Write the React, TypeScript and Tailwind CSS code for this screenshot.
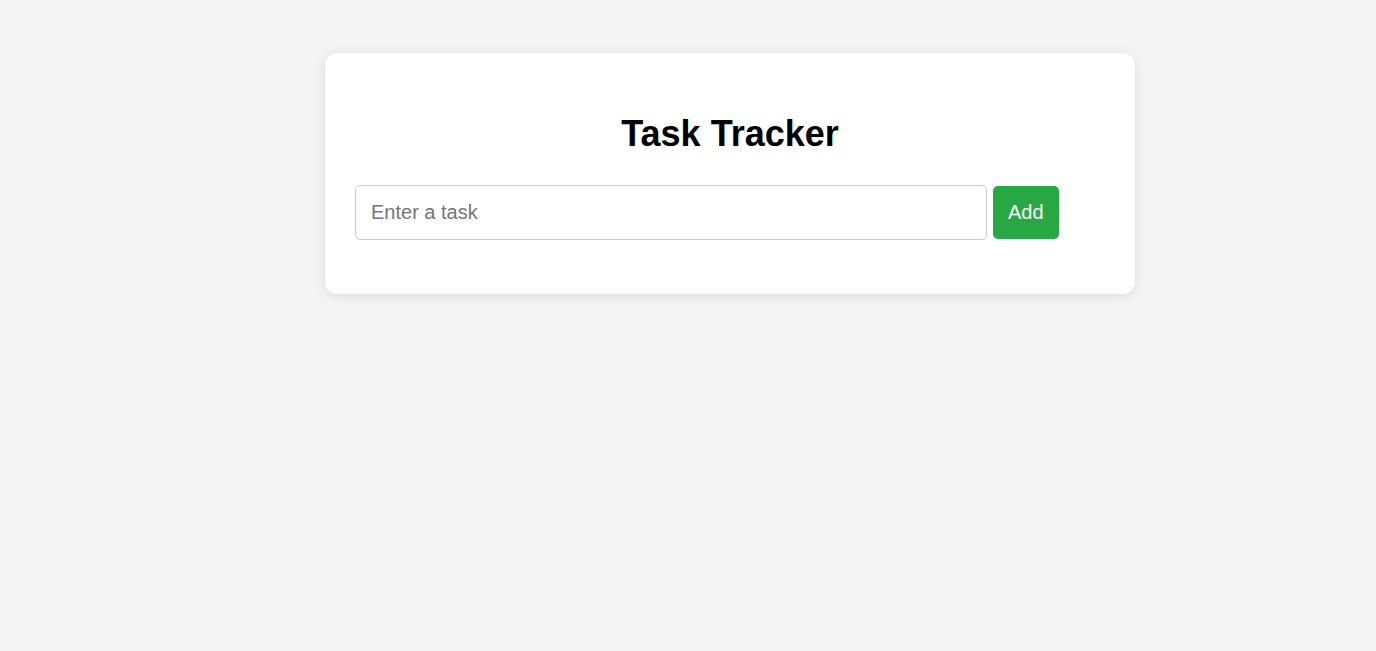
import React, { useState } from 'react';

export default function App() {
  const [task, setTask] = useState('');

  return (
    <div className="min-h-screen bg-[#f4f4f4] pt-[53px] font-['Liberation_Sans',Arial,sans-serif]">
      <div className="ml-[325px] w-[810px] rounded-[12px] bg-white px-[30px] pt-[30px] pb-[54px] shadow-[0_2px_12px_rgba(0,0,0,0.1)]">
        <h1 className="mt-[30px] mb-[31px] text-center text-[36px] leading-[41px] font-bold text-black">
          Task Tracker
        </h1>
        <div className="flex items-center">
          <input
            type="text"
            value={task}
            onChange={(e) => setTask(e.target.value)}
            placeholder="Enter a task"
            className="h-[55px] w-[632px] rounded-[5px] border border-[#ccc] px-[15px] text-[20px] text-black placeholder:text-[#757575] outline-none"
          />
          <button className="ml-[6px] h-[53px] rounded-[5px] bg-[#28a745] px-[15px] pb-[2px] text-[20px] text-white">
            Add
          </button>
        </div>
      </div>
    </div>
  );
}
